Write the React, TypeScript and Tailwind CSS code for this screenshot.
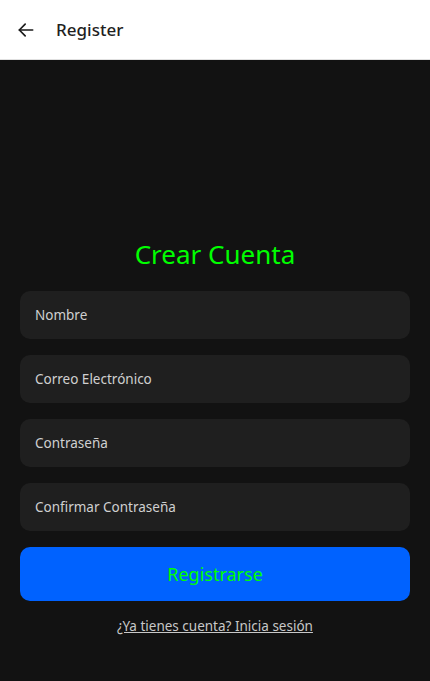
import React from 'react';

const fields = ['Nombre', 'Correo Electrónico', 'Contraseña', 'Confirmar Contraseña'];

export default function App() {
  return (
    <div
      className="min-h-screen flex flex-col bg-[#121212]"
      style={{ fontFamily: '"Noto Sans", "Open Sans", sans-serif' }}
    >
      <header className="h-[60px] bg-white border-b border-[#e0e0e0] flex items-center px-4 shrink-0">
        <button className="w-5 h-5 flex items-center justify-center text-[#1a1a1a]">
          <svg width="20" height="20" viewBox="0 0 24 24" fill="none" stroke="currentColor" strokeWidth="2" strokeLinecap="round" strokeLinejoin="round">
            <path d="M20 12H4" />
            <path d="M11 5l-7 7 7 7" />
          </svg>
        </button>
        <h1 className="ml-[20px] text-[17px] font-medium text-[#1f1f1f]">Register</h1>
      </header>

      <main className="flex-1 px-5 pt-[176px]">
        <h2 className="text-center text-[26px] leading-[36px] text-[#00ff00] mb-[19px]">Crear Cuenta</h2>

        <div className="flex flex-col gap-4">
          {fields.map((f) => (
            <input
              key={f}
              placeholder={f}
              type={f.startsWith('Contr') || f.startsWith('Confirmar') ? 'password' : 'text'}
              className="h-12 w-full rounded-[10px] bg-[#1f1f1f] px-[15px] text-[13.5px] text-[#dddddd] placeholder:text-[#d0d0d0] outline-none"
            />
          ))}
        </div>

        <button className="mt-4 h-[54px] w-full rounded-[10px] bg-[#0062ff] text-[18px] text-[#00ff00]">
          Registrarse
        </button>

        <div className="mt-[12px] text-center">
          <a href="#" className="text-[13.5px] text-[#c8c8c8] underline">
            ¿Ya tienes cuenta? Inicia sesión
          </a>
        </div>
      </main>
    </div>
  );
}
